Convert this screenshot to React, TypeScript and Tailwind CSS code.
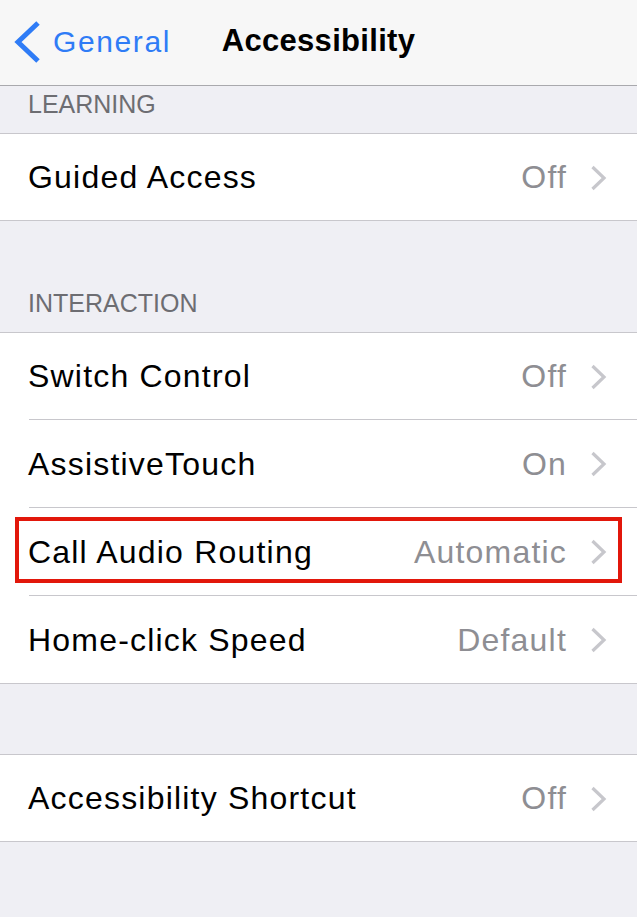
import React from "react";

function Chevron() {
  return (
    <svg width="17" height="26" viewBox="0 0 17 26" className="ml-[23px] mt-[1px] shrink-0">
      <polyline points="2.5,2 14,13 2.5,24" fill="none" stroke="#c7c7cc" strokeWidth="3.2" strokeLinejoin="miter" />
    </svg>
  );
}

function Row({ label, value, h, highlight }: { label: string; value: string; h: string; highlight?: boolean }) {
  return (
    <div className={`relative flex items-center bg-white pl-[28px] pr-[30px] ${h}`}>
      <span className="flex-1 text-[32px] tracking-[1.2px] text-black">{label}</span>
      <span className="text-[32px] tracking-[1.2px] text-[#8e8e93]">{value}</span>
      <Chevron />
      {highlight && (
        <div className="absolute left-[15px] top-[9px] h-[66px] w-[607px] border-4 border-[#e2170b]" />
      )}
    </div>
  );
}

function Sep() {
  return (
    <div className="bg-white pl-[29px]">
      <div className="h-px bg-[#c8c7cc]" />
    </div>
  );
}

export default function App() {
  return (
    <div className="h-[917px] w-[637px] overflow-hidden bg-[#efeff4] font-['Liberation_Sans',Arial,sans-serif]">
      <div className="grid h-[86px] grid-cols-[1fr_auto_1fr] items-center border-b border-[#a9a9ad] bg-[#f7f7f7] pb-[3px]">
        <div className="flex items-center">
          <svg width="28" height="44" viewBox="0 0 28 44" className="ml-[13px] mt-[1px] shrink-0">
            <polyline points="25,3 5,22 25,41" fill="none" stroke="#2f7cf6" strokeWidth="5" strokeLinejoin="miter" />
          </svg>
          <span className="ml-[12px] text-[30px] tracking-[1.6px] text-[#2f7cf6]">General</span>
        </div>
        <div className="text-[31px] font-bold tracking-[0.3px] text-black">Accessibility</div>
        <div />
      </div>

      <div className="flex h-[47px] items-end pb-[16px] pl-[28px] text-[25px] leading-none text-[#6d6d72]">LEARNING</div>
      <div className="border-y border-[#c8c7cc]">
        <Row label="Guided Access" value="Off" h="h-[86px]" />
      </div>

      <div className="flex h-[111px] items-end pb-[16px] pl-[28px] text-[25px] leading-none text-[#6d6d72]">INTERACTION</div>
      <div className="border-y border-[#c8c7cc]">
        <Row label="Switch Control" value="Off" h="h-[86px]" />
        <Sep />
        <Row label="AssistiveTouch" value="On" h="h-[87px]" />
        <Sep />
        <Row label="Call Audio Routing" value="Automatic" h="h-[87px]" highlight />
        <Sep />
        <Row label="Home-click Speed" value="Default" h="h-[87px]" />
      </div>

      <div className="h-[70px]" />
      <div className="border-y border-[#c8c7cc]">
        <Row label="Accessibility Shortcut" value="Off" h="h-[86px]" />
      </div>
    </div>
  );
}
